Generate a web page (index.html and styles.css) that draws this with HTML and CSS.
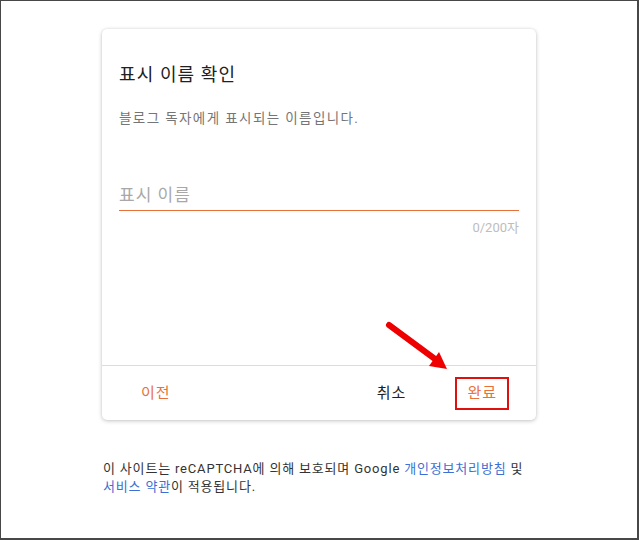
FILE: index.html
```html
<!DOCTYPE html>
<html lang="ko">
<head>
<meta charset="utf-8">
<title>표시 이름 확인</title>
<link rel="stylesheet" href="styles.css">
</head>
<body>
<div class="frame">
  <div class="column">
    <div class="card">
      <div class="card-body">
        <h1 class="title">표시 이름 확인</h1>
        <p class="subtitle">블로그 독자에게 표시되는 이름입니다.</p>
        <div class="field">
          <div class="input">표시 이름</div>
        </div>
        <div class="counter">0/200자</div>
      </div>
      <div class="card-footer">
        <button class="btn btn-prev">이전</button>
        <div class="spacer"></div>
        <button class="btn btn-cancel">취소</button>
        <button class="btn btn-done">완료</button>
      </div>
    </div>
    <p class="notice">이 사이트는 reCAPTCHA에 의해 보호되며 Google <a href="#">개인정보처리방침</a> 및<br><a href="#">서비스 약관</a>이 적용됩니다.</p>
  </div>
  <svg class="arrow" width="639" height="540" viewBox="0 0 639 540">
    <line x1="389" y1="325" x2="435" y2="359" stroke="#ee0000" stroke-width="6" stroke-linecap="round"/>
    <polygon points="447,369 429,366 439,352" fill="#ee0000"/>
  </svg>
</div>
</body>
</html>
```
FILE: styles.css
```css
html, body {
  margin: 0;
  padding: 0;
  background: #ffffff;
}
body {
  font-family: Roboto, "Noto Sans CJK KR", sans-serif;
}
.frame {
  position: relative;
  width: 639px;
  height: 540px;
  box-sizing: border-box;
  border-style: solid;
  border-color: #474747;
  border-width: 1px 2px 2px 1px;
  overflow: hidden;
}
.column {
  width: 434px;
  margin: 28px 0 0 101px;
}
.card {
  background: #fff;
  border-radius: 5px;
  box-shadow: 0 1px 4px rgba(0,0,0,0.22), 0 0 2px rgba(0,0,0,0.08);
}
.card-body {
  padding: 34px 17px 0 17px;
  height: 302px;
  border-bottom: 1px solid #dcdcdc;
}
.title {
  margin: 0;
  font-size: 18px;
  font-weight: 400;
  line-height: 24px;
  letter-spacing: 1.1px;
  color: #212121;
}
.subtitle {
  margin: 22px 0 0 0;
  font-size: 13.5px;
  line-height: 18px;
  letter-spacing: 1.4px;
  color: #757575;
}
.field {
  margin-top: 57px;
  border-bottom: 1px solid #e8703a;
  padding-bottom: 4px;
}
.input {
  font-size: 17px;
  line-height: 22px;
  letter-spacing: 1px;
  color: #a8a8a8;
}
.counter {
  margin-top: 9px;
  text-align: right;
  font-size: 13px;
  line-height: 16px;
  color: #bdbdbd;
}
.card-footer {
  display: flex;
  align-items: center;
  height: 54px;
  padding: 0 27px;
}
.spacer {
  flex: 1;
}
.btn {
  font-family: Roboto, "Noto Sans CJK KR", sans-serif;
  font-size: 15px;
  letter-spacing: 1px;
  background: none;
  border: 2px solid transparent;
  padding: 0 10px;
  height: 33px;
  line-height: 29px;
  cursor: pointer;
}
.btn-prev {
  color: #e8703a;
}
.btn-cancel {
  color: #212121;
  margin-right: 37px;
}
.btn-done {
  color: #e8703a;
  border-color: #e01010;
}
.notice {
  margin: 40px 0 0 1px;
  font-size: 13px;
  line-height: 18px;
  letter-spacing: 0.82px;
  color: #333333;
}
.notice a {
  color: #3b6fd6;
  text-decoration: none;
}
.arrow {
  position: absolute;
  left: -1px;
  top: -1px;
  pointer-events: none;
}
```
